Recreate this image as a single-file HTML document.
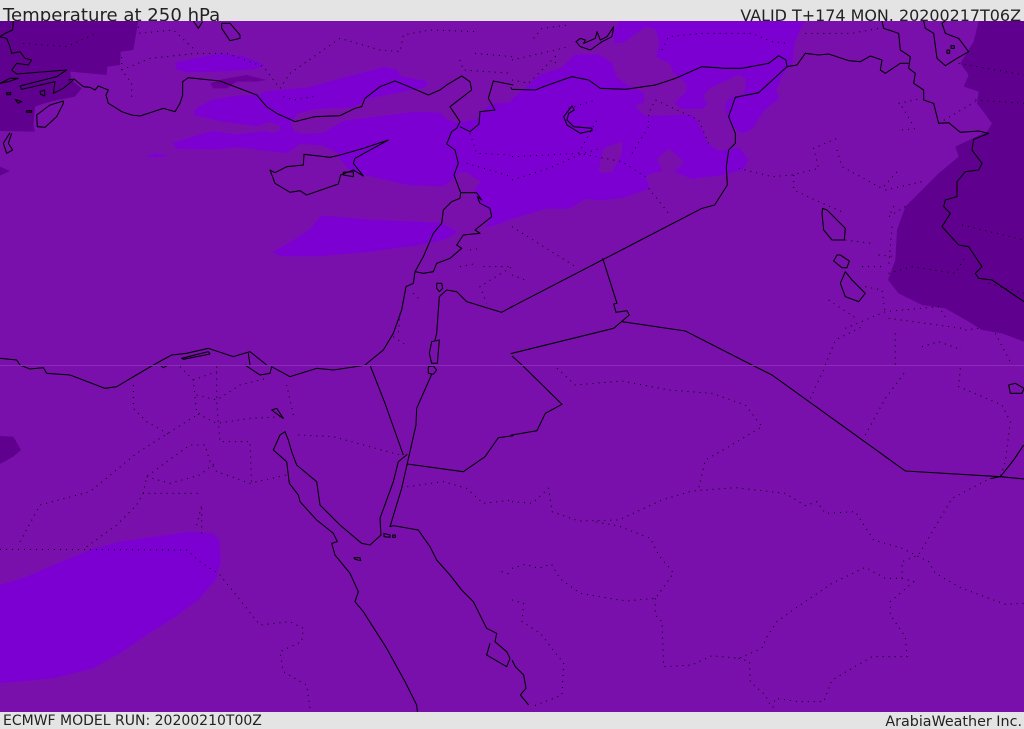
<!DOCTYPE html>
<html><head><meta charset="utf-8"><style>
html,body{margin:0;padding:0;background:#e4e4e4}
#p{position:relative;width:1024px;height:729px;overflow:hidden;background:#e4e4e4;font-family:"DejaVu Sans",sans-serif;color:#222}
#p div{position:absolute;white-space:nowrap}
svg{position:absolute;left:0;top:21px}
</style></head><body><div id="p">
<div style="left:3px;top:5px;font-size:18.1px;line-height:21px">Temperature at 250 hPa</div>
<div style="right:3px;top:5px;font-size:15.95px;line-height:21px">VALID T+174 MON. 20200217T06Z</div>
<div style="left:3px;top:713px;font-size:14px;line-height:17px">ECMWF MODEL RUN: 20200210T00Z</div>
<div style="right:2px;top:714px;font-size:14.3px;line-height:17px">ArabiaWeather Inc.</div>
<svg width="1024" height="691" viewBox="0 0 1024 691" xmlns="http://www.w3.org/2000/svg">
<rect width="1024" height="691" fill="#7a10ac"/>
<g transform="translate(0,-21) scale(.33333)">
<!-- tile 1 -->
<g>
<g fill="#60008f"><path d="M0,63H415L400,150 362,155 360,195 322,200 320,225 210,215 215,240 245,265 225,290 150,305 105,320 100,375 105,395 0,393Z"/><path d="M0,500L30,513 0,527Z"/></g>
<g fill="#7d00d3" stroke="#7d00d3" stroke-width="4" stroke-linejoin="round">
<path d="M527,190 570,180 660,162 730,170 790,195 770,205 680,212 560,215 530,205Z"/>
<path d="M585,330 640,300 700,290 780,285 800,275 920,265 1050,230 1150,203 1190,210 1200,230 1280,245 1275,260 1200,275 1100,295 1060,320 950,325 890,340 870,370 880,395 910,403 970,400 1030,365 1100,355 1250,337 1320,340 1340,360 1370,370 1430,360 1460,325 1480,312 1540,308 1540,652 1500,670 1460,680 1480,640 1450,615 1430,600 1425,570 1445,545 1400,515 1375,515 1365,530 1330,558 1230,555 1100,525 1050,510 1025,480 1010,455 970,435 900,430 860,458 710,440 650,447 530,445 520,430 600,405 640,395 710,405 790,395 820,400 845,390 840,375 810,365 770,377 660,362 585,345Z"/>
<path d="M820,757 860,735 930,690 965,648 1100,660 1320,670 1370,695 1340,715 1250,735 1100,755 950,767 850,767Z"/>
<path d="M445,467 470,462 500,467 470,470Z"/>
</g>
<path d="M630,250 670,237 740,225 800,240 770,245 710,245 680,265 640,265Z" fill="#6b0099"/>
<path d="M855,490 870,475 880,495 865,510Z" fill="#7a10ac"/>
<g fill="none" stroke="#000" stroke-width="3.2" stroke-linejoin="round">
<path d="M205,240 222,237 250,260 270,262 285,270 295,258 325,270 318,285 325,310 345,322 365,335 395,345 420,348 490,325 525,335 540,310 548,285 548,245 565,233 660,243 770,285 800,320 830,340 885,365 945,350 1020,347 1065,325 1085,320 1095,295 1140,260 1185,243 1215,255 1285,285 1320,270 1340,255 1385,228 1410,245 1415,270 1350,320 1380,365 1370,385 1355,395 1340,432 1365,450 1375,490 1362,525 1382,578 1380,595 1355,605 1330,630 1325,670 1300,700 1270,770 1245,815 1240,850 1218,860 1205,930 1180,1000 1150,1050 1095,1095"/>
<path d="M1380,380 1410,395 1437,372 1440,335 1485,330 1465,295 1480,243 1540,255"/>
<path d="M1382,578H1430L1445,600 1432,590 1440,610 1470,625 1475,650 1425,690 1440,700 1390,705 1370,735 1385,745 1350,775 1310,790 1300,815 1270,820 1245,815"/>
<path d="M1540,918 1505,937 1400,905 1370,875 1340,870 1318,890 1310,1000 1305,1020"/>
<path d="M1310,850 1325,850 1328,865 1318,875 1310,865Z"/>
<path d="M1295,1025 1318,1020 1312,1090 1295,1090 1288,1060Z"/>
<path d="M1165,420 1090,445 1020,465 990,472 912,463 910,495 860,500 825,518 810,510 825,550 870,577 900,572 920,585 1015,552 1022,525 1060,510 1090,528 1060,490 1065,475 1165,420Z"/>
<path d="M1030,517 1060,515 1060,530 1030,525Z"/>
<path d="M190,303 150,315 110,345 112,380 135,382 170,350 190,310Z"/>
<path d="M30,398 10,430 20,460 38,450 25,430 35,400"/>
<path d="M40,63 38,90 15,100 0,110 20,115 30,140 35,160 60,155 75,175 95,180 85,195 50,190 35,210 50,222 200,210 170,230 60,258 65,268 165,245 160,280 190,265 220,240"/>
<path d="M0,250 30,235 55,235 25,245 0,250M20,278h12v6h-12zM45,298 65,305 55,310ZM80,332h15v5h-15zM120,275l14,-5v18l-12,-5z"/>
<path d="M580,63 595,85 608,65M665,70 690,70 720,105 720,115 690,122 665,85Z"/>
<path d="M0,1075 50,1080 60,1095M460,1095 515,1065 560,1060 625,1045 700,1070 750,1055 800,1095"/>
<path d="M545,1075 625,1055 630,1062 550,1078Z"/>
<path d="M745,1060 750,1095"/>
</g>
<g fill="none" stroke="#000" stroke-width="3" stroke-dasharray="3 15">
<path d="M410,63 420,100 520,90 590,155"/><path d="M840,265 870,220 1020,115 1140,150 1200,155 1210,105 1290,90 1430,95"/><path d="M1380,180 1390,210 1536,220M1425,160 1536,170"/><path d="M365,210 450,175 590,160 680,160 790,200 840,265"/><path d="M395,290 395,250 365,210 365,160"/><path d="M70,130 200,140 290,100"/><path d="M850,290 880,300 940,290"/><path d="M1240,880 1260,900M1180,1010 1225,1040M1200,940 1195,1000"/><path d="M1450,800 1536,800 1440,860 1460,910M1380,800 1430,790M1410,750 1440,745"/><path d="M1400,490 1536,530M1410,400 1430,460 1536,465"/>
</g>
</g>
<!-- tile 2 -->
<g transform="translate(1536,0)">
<path d="M1400,63 1385,125 1345,190 1370,225 1355,260 1400,275 1395,310 1440,370 1425,395 1330,440 1340,470 1280,520 1180,620 1155,690 1150,780 1128,840 1160,880 1230,915 1300,925 1370,965 1410,990 1470,1000 1536,1025V63Z" fill="#60008f"/>
<g fill="#7d00d3" stroke="#7d00d3" stroke-width="4" stroke-linejoin="round">
<path d="M325,63 305,100 310,128 335,125 400,78 430,85 445,125 435,170 475,190 485,215 525,250 525,275 490,310 510,325 570,325 585,310 570,290 590,265 680,222 703,235 700,280 650,300 640,320 655,370 680,393 695,398 720,385 755,330 800,295 790,270 815,215 840,190 845,130 875,63Z"/>
<path d="M-4,308 0,300 30,275 85,225 150,205 190,165 260,165 300,190 310,230 350,260 395,280 395,305 365,320 400,350 540,345 570,390 585,430 620,455 680,445 708,480 690,510 620,525 540,535 490,515 520,485 470,443 432,478 450,510 400,525 410,565 340,590 270,600 220,595 170,625 100,625 0,655 -4,652Z"/>
</g>
<path d="M260,510 275,445 330,425 330,460 300,515 270,520Z" fill="#7a10ac"/>
<g fill="none" stroke="#000" stroke-width="3.2" stroke-linejoin="round">
<path d="M-4,262 0,268 70,270 100,258 180,230 230,240 265,265 340,268 430,255 490,235 570,200 640,205 690,205 770,190 800,167 822,180 825,200 855,195 880,160 920,165 950,162 1010,182 1045,185 1075,168 1110,180 1105,210 1120,220 1165,190 1190,190"/>
<path d="M1110,63 1115,85 1160,100 1165,150 1195,170 1190,205 1210,220 1205,250 1235,270 1235,300 1265,310 1280,370 1310,368 1345,397 1400,393 1430,400 1385,418 1380,450 1410,490 1400,510 1360,515 1335,545 1335,590 1300,600 1295,620 1315,640 1290,680 1340,735 1370,740 1410,800 1390,820 1400,835 1440,840 1536,905"/>
<path d="M1235,63 1240,85 1265,100 1275,175 1300,197 1335,175 1370,155 1340,115 1300,100 1290,70 1300,63"/>
<path d="M1305,150h8v10h-8zM1317,137h10v8h-10z"/>
<path d="M825,200 740,278 670,292 650,350 670,400 670,430 650,450 643,500 646,555 608,615 570,625 0,920 -4,922"/>
<path d="M272,775 315,910 305,912 312,937 345,932 352,945 305,985 0,1060 -4,1061"/>
<path d="M330,965 520,993 720,1095"/>
<path d="M0,1068 30,1095"/>
<path d="M192,125 205,115 220,120 215,130 250,115 255,95 265,120 285,110 305,80 300,110 270,125 235,150 205,140Z"/>
<path d="M180,318 187,330 170,340 165,360 185,380 240,385 240,392 205,400 165,375 155,350Z"/>
<path d="M932,625 945,630 1000,685 997,720 960,720 935,690 930,640Z"/>
<path d="M975,765 985,765 1012,783 1005,803 990,803 965,783Z"/>
<path d="M1000,815 1020,840 1060,880 1040,905 1000,890 985,850Z"/>
</g>
<g fill="none" stroke="#000" stroke-width="3" stroke-dasharray="3 15">
<path d="M0,180 130,150 170,140"/><path d="M65,115 90,85 170,75"/><path d="M450,150 470,110 570,100 720,100 780,125 830,130"/><path d="M880,100 1020,100 1100,85"/><path d="M0,240 50,250 130,170 130,200"/><path d="M170,325 250,300"/><path d="M0,470 200,460 330,485 400,530"/><path d="M0,540 110,505 200,465 265,445"/><path d="M200,460 260,350M360,460 410,380 410,340 430,300 560,360 590,430"/><path d="M410,565 470,640"/><path d="M0,680 190,800"/><path d="M0,825 40,840"/><path d="M680,505 780,530 840,525 920,505 905,445 975,415"/><path d="M845,525 845,570 910,600 1000,640"/><path d="M975,450 990,500 1110,565 1160,510"/><path d="M1120,570 1230,545"/><path d="M1340,190 1536,225M1160,310 1230,295M1390,300 1536,310M1170,320 1200,370M1170,390 1220,385"/><path d="M1280,370 1390,305"/><path d="M1180,620 1130,650 1150,610M1140,680 1130,800"/><path d="M1350,675 1536,720"/><path d="M1100,765 1150,770M1050,800 1120,800"/><path d="M1000,720 1080,730M1130,820 1200,800 1330,820 1360,770"/><path d="M950,900 1040,960M1060,860 1110,870 1120,940"/><path d="M1000,985 1120,935 1280,920 1300,950M940,1095 970,1020 1050,980M1150,1000 1150,1095M1230,1040 1280,1025 1350,1050M1450,1000 1500,1095"/><path d="M1130,955 1350,985M1360,990 1400,985"/><path d="M1430,850 1536,880"/>
</g>
</g>
<!-- tile 3 -->
<g transform="translate(0,1095)">
<path d="M0,213 40,215 63,255 40,275 0,297Z" fill="#60008f"/>
<path d="M0,660 80,635 160,600 280,550 370,528 570,500 640,505 658,525 662,590 650,640 600,700 520,760 440,810 360,865 280,910 160,940 0,955Z" fill="#7d00d3"/>
<g fill="none" stroke="#000" stroke-width="3.2" stroke-linejoin="round">
<path d="M60,0 90,12 130,8 140,25 210,30 315,70 350,65 460,0"/>
<path d="M480,0 490,8 505,0"/>
<path d="M735,0 780,30 810,25 815,5 870,35 950,10 1000,15 1100,0"/>
<path d="M1110,0 1155,115 1210,270"/>
<path d="M1285,5 1300,3 1310,15 1300,28 1285,25ZM1295,28 1250,130 1248,180 1228,268"/>
<path d="M1222,268 1195,290 1180,350 1140,460 1143,510 1110,540 1085,535 1020,480 960,420 950,350 890,300 875,260 865,225 855,200 840,210 820,255 860,290 868,355 895,390 900,410 950,465 1000,505 1012,530 995,535 1005,570 1050,625 1075,680 1065,710 1090,740 1160,850 1215,950 1250,1020 1252,1040"/>
<path d="M1228,268 1205,370 1170,485 1180,482 1255,495 1290,545 1310,585 1350,630 1385,675 1420,710 1460,790 1490,805 1485,830 1520,860 1530,880 1520,905 1460,870 1470,835"/>
<path d="M1222,297 1390,320 1455,275 1495,218 1540,212"/>
<path d="M815,135 830,130 850,160 835,150Z"/>
<path d="M1062,578 1080,578 1082,587 1065,583ZM1152,505 1170,510 1170,517 1152,515ZM1178,510h8v7h-8z"/>
</g>
<g fill="none" stroke="#000" stroke-width="3" stroke-dasharray="3 15">
<path d="M0,553 560,555 600,590 660,630 780,780 870,770 910,790 905,830 840,860 850,920 920,960 930,1030"/>
<path d="M605,505 605,420 590,480"/><path d="M60,530 120,420 270,380 410,265 550,175 600,145"/><path d="M260,545 350,480 410,420 430,385 600,385"/><path d="M430,385 440,335 500,290 570,240 615,240 630,290 650,320 750,355 860,330"/><path d="M440,335 510,355 600,330 650,290"/><path d="M400,60 400,130 440,170 510,210"/><path d="M540,5 580,45 590,145 650,175 750,160 850,155"/><path d="M650,5 650,110 660,230 750,230 755,355"/><path d="M580,45 650,20M590,90 650,105 720,60 800,40"/><path d="M880,150 860,60"/><path d="M895,210 1000,215 1200,270"/><path d="M1222,365 1330,350 1400,370 1450,415 1536,405"/><path d="M1505,620 1536,630"/>
</g>
</g>
<!-- tile 4 -->
<g transform="translate(1536,1095)">
<g fill="none" stroke="#000" stroke-width="3.2" stroke-linejoin="round">
<path d="M720,0 780,30 1180,318 1465,335 1536,342"/>
<path d="M1535,240 1505,285 1465,335 1435,341"/>
<path d="M30,0 150,118 100,145 75,197 0,210 -4,211"/>
<path d="M1490,60 1510,55 1536,70 1530,85 1495,85Z"/>
<path d="M0,885 10,905 35,930 42,970 25,990 50,1020"/>
</g>
<g fill="none" stroke="#000" stroke-width="3" stroke-dasharray="3 15">
<path d="M135,10 190,60 330,48 470,75 600,85 700,120 750,185 650,245 580,285 560,370"/>
<path d="M0,410 60,415 110,370 120,440 200,468 320,465 450,405 540,378 670,368 820,385 880,422 915,410 940,445 1030,440 1085,525 1170,550 1250,590 1270,625 1350,670 1480,718 1536,715"/>
<path d="M0,610 40,598 80,610 118,597 145,642 205,685 340,708 430,700 485,625 440,570 415,520 320,483 250,470"/>
<path d="M430,700 430,750 450,770 455,905 540,900 600,872 680,880 750,850 765,815 795,770 850,730 960,655 1060,607 1120,640 1170,640 1205,650 1135,710 1135,750 1180,815 1185,875 1080,875 960,945 935,1010 860,1010 790,1000 780,1040"/>
<path d="M680,880 712,890 715,950 760,990 780,1030"/>
<path d="M1170,640 1170,590 1220,570 1320,400 1435,340"/>
<path d="M1060,210 1120,100 1180,20M895,100 935,15M1345,10 1340,65 1470,120 1495,170 1480,290 1465,335"/>
<path d="M0,705 35,715 30,770 85,805 155,895 150,990 60,1025"/>
</g>
</g>
</g>
<rect x="0" y="344" width="1024" height="1" fill="#8a2cb4"/>
</svg>
</div></body></html>
